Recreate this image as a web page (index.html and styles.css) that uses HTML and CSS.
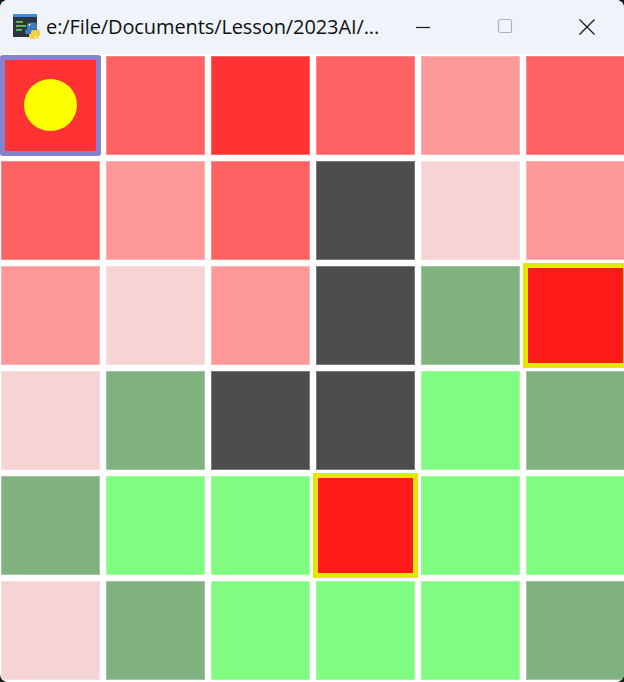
FILE: index.html
```html
<!DOCTYPE html>
<html>
<head>
<meta charset="utf-8">
<link rel="stylesheet" href="styles.css">
</head>
<body>
<div class="window">
  <div class="titlebar">
    <svg class="appicon" width="28" height="28" viewBox="0 0 28 28">
      <rect x="0" y="0" width="24" height="23" fill="#2d3540"/>
      <rect x="0" y="0" width="24" height="3" fill="#3a8fd8"/>
      <rect x="3" y="7" width="7" height="1.8" fill="#5fc25a"/>
      <rect x="3" y="11" width="10" height="1.8" fill="#5fc25a"/>
      <rect x="3" y="15" width="6" height="1.8" fill="#5fc25a"/>
      <path d="M14 11.5 a3 3 0 0 1 3 -3 h4 a3 3 0 0 1 3 3 v4 h-7 v1 h-3 z" fill="#3f7cc0"/>
      <path d="M13 17 h10 a3 3 0 0 0 3 -3 v0 h0 v8 a3 3 0 0 1 -3 3 h-4 a3 3 0 0 1 -3 -3 v-2 h-3 z" fill="#f3d03e"/>
      <rect x="12" y="15" width="9" height="5" rx="2" fill="#3f7cc0"/>
      <rect x="18" y="16" width="9" height="6" rx="2" fill="#f3d03e"/>
      <circle cx="16.5" cy="10.8" r="0.9" fill="#fff"/>
      <circle cx="22.5" cy="23" r="0.9" fill="#fff"/>
    </svg>
    <span class="title">e:/File/Documents/Lesson/2023AI/...</span>
    <div class="controls">
      <span class="ctl minimize"><svg width="16" height="16" viewBox="0 0 16 16"><line x1="1" y1="8.5" x2="15" y2="8.5" stroke="#1a1a1a" stroke-width="1.2"/></svg></span>
      <span class="ctl maximize"><svg width="16" height="16" viewBox="0 0 16 16"><rect x="1.5" y="1.5" width="13" height="13" rx="2" fill="none" stroke="#b0b4b8" stroke-width="1.2"/></svg></span>
      <span class="ctl close"><svg width="18" height="18" viewBox="0 0 18 18"><path d="M1.5 1.5 L16.5 16.5 M16.5 1.5 L1.5 16.5" stroke="#1a1a1a" stroke-width="1.3" fill="none"/></svg></span>
    </div>
  </div>
  <div class="grid">
    <div class="cell red agent"><span class="dot"></span></div>
    <div class="cell mid"></div>
    <div class="cell red"></div>
    <div class="cell mid"></div>
    <div class="cell light"></div>
    <div class="cell mid"></div>

    <div class="cell mid"></div>
    <div class="cell light"></div>
    <div class="cell mid"></div>
    <div class="cell wall"></div>
    <div class="cell pale"></div>
    <div class="cell light"></div>

    <div class="cell light"></div>
    <div class="cell pale"></div>
    <div class="cell light"></div>
    <div class="cell wall"></div>
    <div class="cell dgreen"></div>
    <div class="cell goal"></div>

    <div class="cell pale"></div>
    <div class="cell dgreen"></div>
    <div class="cell wall"></div>
    <div class="cell wall"></div>
    <div class="cell green"></div>
    <div class="cell dgreen"></div>

    <div class="cell dgreen"></div>
    <div class="cell green"></div>
    <div class="cell green"></div>
    <div class="cell goal"></div>
    <div class="cell green"></div>
    <div class="cell green"></div>

    <div class="cell pale"></div>
    <div class="cell dgreen"></div>
    <div class="cell green"></div>
    <div class="cell green"></div>
    <div class="cell green"></div>
    <div class="cell dgreen"></div>
  </div>
</div>
</body>
</html>
```
FILE: styles.css
```css
html, body {
  margin: 0;
  padding: 0;
  background: #1c1c1c;
}
.window {
  width: 624px;
  height: 682px;
  background: #ffffff;
  border-radius: 8px;
  overflow: hidden;
  display: flex;
  flex-direction: column;
}
.titlebar {
  height: 54px;
  flex: none;
  background: #eef4f9;
  display: flex;
  align-items: center;
  padding-left: 13px;
  box-sizing: border-box;
  font-family: "Open Sans", "Noto Sans", sans-serif;
}
.appicon {
  flex: none;
  margin-top: 1px;
}
.title {
  margin-left: 5px;
  font-size: 20px;
  color: #111111;
  letter-spacing: -0.1px;
  white-space: nowrap;
  margin-top: -2px;
}
.controls {
  display: flex;
  align-items: center;
  margin-left: auto;
}
.ctl {
  display: flex;
  align-items: center;
  justify-content: center;
}
.minimize { margin-right: 66px; }
.maximize { margin-right: 65px; margin-top: -2px; }
.close { margin-right: 28px; margin-top: -1px; }

.grid {
  display: grid;
  grid-template-columns: repeat(6, 99px);
  grid-auto-rows: 99px;
  gap: 6px;
  padding: 2px 0 0 1px;
}
.cell {
  box-shadow: inset 0 0 0 1px rgba(255, 255, 255, 0.25);
  display: flex;
  align-items: center;
  justify-content: center;
}
.red { background: #ff3333; }
.mid { background: #ff6262; }
.light { background: #ff9999; }
.pale { background: #f6d4d4; }
.wall { background: #4d4d4d; }
.dgreen { background: #80b280; }
.green { background: #80fc80; }
.goal {
  background: #ff1a1a;
  box-shadow: 0 0 0 3px #e6e600, inset 0 0 0 2px #e6e600;
  position: relative;
  z-index: 1;
}
.agent {
  box-shadow: 0 0 0 1px #8383cf, inset 0 0 0 4px #8383cf;
  border-radius: 2px;
  position: relative;
  z-index: 1;
}
.dot {
  width: 53px;
  height: 52px;
  border-radius: 50%;
  background: #ffff00;
  margin-top: -2px;
}
```
